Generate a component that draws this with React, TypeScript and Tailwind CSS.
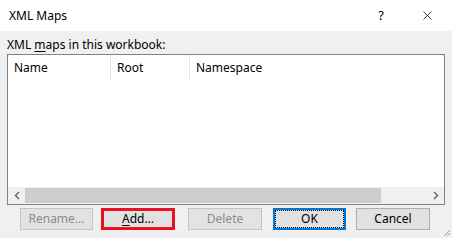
import { X } from 'lucide-react'

const font = { fontFamily: "'Segoe UI', 'Noto Sans', 'Liberation Sans', sans-serif" }

function Btn({ label, accel, disabled, className = '' }: { label: string; accel?: number; disabled?: boolean; className?: string }) {
  const text =
    accel === undefined ? (
      label
    ) : (
      <>
        {label.slice(0, accel)}
        <span className="underline underline-offset-2">{label[accel]}</span>
        {label.slice(accel + 1)}
      </>
    )
  return (
    <div
      className={`flex items-center justify-center text-[12px] ${
        disabled ? 'border border-[#c4c4c4] bg-[#e3e3e3] text-[#8a8a8a]' : 'bg-[#e1e1e1] text-black'
      } ${className}`}
    >
      {text}
    </div>
  )
}

export default function App() {
  return (
    <div className="flex h-[238px] w-[452px] flex-col bg-[#f0f0f0] text-black" style={font}>
      {/* title bar */}
      <div className="flex h-[31px] items-center bg-white">
        <span className="pl-[9px] text-[12px]">XML Maps</span>
        <span className="ml-auto mr-[36px] text-[13px]">?</span>
        <X className="mr-[17px] h-[15px] w-[15px]" strokeWidth={1.2} />
      </div>

      <div className="flex flex-1 flex-col px-[7px]">
        <div className="mt-[6px] text-[12px] leading-[15px]">
          XML <span className="underline underline-offset-2">m</span>aps in this workbook:
        </div>

        {/* list */}
        <div className="mt-[2px] flex h-[151px] flex-col border border-[#828282] bg-white">
          <div className="flex h-[25px] items-center text-[12px]">
            <div className="w-[103px] border-r border-[#e5e5e5] pl-[6px] leading-[25px]">Name</div>
            <div className="w-[79px] border-r border-[#e5e5e5] pl-[6px] leading-[25px]">Root</div>
            <div className="flex-1 pl-[6px] leading-[25px]">Namespace</div>
          </div>
          <div className="flex-1" />
          <div className="flex h-[17px] bg-[#f0f0f0]">
            <div className="flex w-[17px] items-center justify-center">
              <svg width="6" height="9" viewBox="0 0 6 9">
                <path d="M5 1 L1.5 4.5 L5 8" fill="none" stroke="#606060" strokeWidth="1.4" />
              </svg>
            </div>
            <div className="my-[1px] w-[356px] bg-[#cdcdcd]" />
            <div className="flex-1" />
            <div className="flex w-[17px] items-center justify-center">
              <svg width="6" height="9" viewBox="0 0 6 9">
                <path d="M1 1 L4.5 4.5 L1 8" fill="none" stroke="#606060" strokeWidth="1.4" />
              </svg>
            </div>
          </div>
        </div>

        {/* buttons */}
        <div className="mt-[3px] flex items-center">
          <Btn label="Rename..." disabled className="ml-[13px] h-[22px] w-[73px]" />
          <div className="ml-[8px] border-[3px] border-[#e81123]">
            <Btn label="Add..." accel={0} className="h-[16px] w-[68px]" />
          </div>
          <Btn label="Delete" disabled className="ml-[13px] h-[22px] w-[74px]" />
          <div className="ml-[11px] border-2 border-[#0078d7]">
            <div className="flex h-[18px] w-[69px] items-center justify-center border border-dotted border-black bg-[#e1e1e1] text-[12px]">
              OK
            </div>
          </div>
          <Btn label="Cancel" className="ml-[10px] h-[22px] w-[74px] border border-[#adadad]" />
        </div>
      </div>

      {/* size grip */}
      <div className="relative">
        <svg className="absolute bottom-[1px] right-[1px]" width="10" height="10" viewBox="0 0 10 10">
          <path d="M9 3 L3 9 M9 6 L6 9" stroke="#a0a0a0" strokeWidth="1" />
        </svg>
      </div>
    </div>
  )
}
